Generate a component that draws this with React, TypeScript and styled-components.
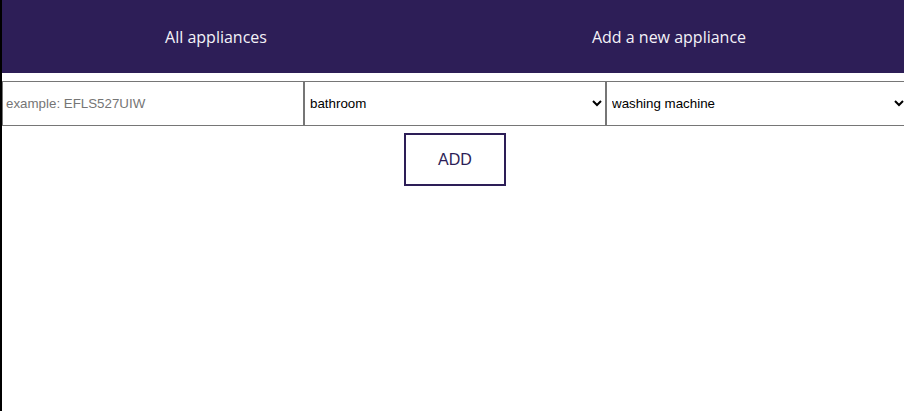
import React from "react";
import styled, { createGlobalStyle } from "styled-components";

const GlobalStyle = createGlobalStyle`
  html, body {
    margin: 0;
    padding: 0;
    background: #ffffff;
    overflow: hidden;
  }
  body {
    font-family: "Liberation Sans", Arial, sans-serif;
  }
`;

const Page = styled.div`
  min-height: 100vh;
  border-left: 2px solid #000000;
  width: 906px;
  background: #ffffff;
`;

const NavBar = styled.nav`
  display: grid;
  grid-template-columns: 453px 453px;
  height: 73px;
  background: #2d1e57;
`;

const NavItem = styled.a`
  display: flex;
  align-items: center;
  justify-content: center;
  padding-right: 25px;
  color: #f4f2f8;
  font-family: "Open Sans", "Noto Sans", sans-serif;
  font-size: 16px;
  text-decoration: none;
  cursor: pointer;
`;

const Form = styled.form`
  display: flex;
  flex-direction: column;
  align-items: center;
  gap: 7px;
  margin-top: 8px;
`;

const Fields = styled.div`
  display: grid;
  grid-template-columns: repeat(3, 302px);
  width: 906px;
`;

const fieldBase = `
  box-sizing: border-box;
  height: 45px;
  margin: 0;
  border: 1px solid #767676;
  border-radius: 0;
  background: #ffffff;
  font-family: "Liberation Sans", Arial, sans-serif;
  font-size: 13.33px;
  color: #000000;
`;

const TextField = styled.input`
  ${fieldBase}
  padding: 0 3px;
  &::placeholder {
    color: #757575;
  }
`;

const SelectField = styled.select`
  ${fieldBase}
  padding: 0 1px;
`;

const AddButton = styled.button`
  box-sizing: border-box;
  width: 102px;
  height: 53px;
  border: 2px solid #2d1e57;
  background: #ffffff;
  color: #2d1e57;
  font-family: "Liberation Sans", Arial, sans-serif;
  font-size: 16px;
  cursor: pointer;
`;

export default function App() {
  return (
    <>
      <GlobalStyle />
      <Page>
        <NavBar>
          <NavItem>All appliances</NavItem>
          <NavItem>Add a new appliance</NavItem>
        </NavBar>
        <Form onSubmit={(e) => e.preventDefault()}>
          <Fields>
            <TextField placeholder="example: EFLS527UIW" />
            <SelectField defaultValue="bathroom">
              <option value="bathroom">bathroom</option>
              <option value="kitchen">kitchen</option>
              <option value="living room">living room</option>
            </SelectField>
            <SelectField defaultValue="washing machine">
              <option value="washing machine">washing machine</option>
              <option value="dishwasher">dishwasher</option>
              <option value="fridge">fridge</option>
            </SelectField>
          </Fields>
          <AddButton type="submit">ADD</AddButton>
        </Form>
      </Page>
    </>
  );
}
